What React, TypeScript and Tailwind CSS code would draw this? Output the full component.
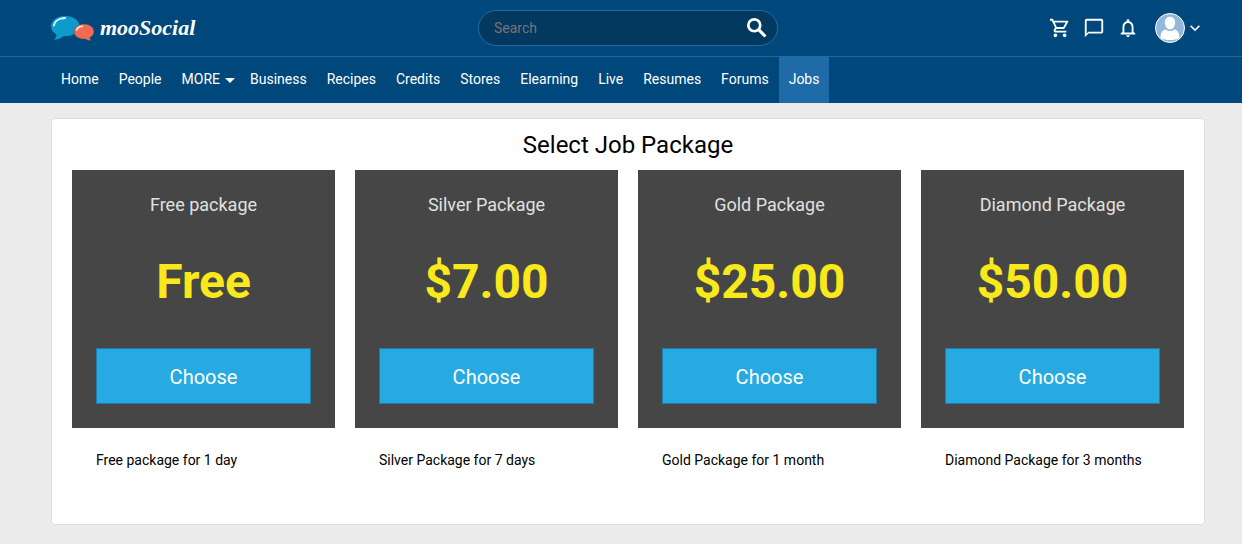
import {
  MdChatBubbleOutline,
  MdExpandMore,
  MdNotificationsNone,
  MdOutlineShoppingCart,
} from "react-icons/md";

const navItems = [
  "Home",
  "People",
  "MORE",
  "Business",
  "Recipes",
  "Credits",
  "Stores",
  "Elearning",
  "Live",
  "Resumes",
  "Forums",
  "Jobs",
];

const packages = [
  { name: "Free package", price: "Free", description: "Free package for 1 day" },
  { name: "Silver Package", price: "$7.00", description: "Silver Package for 7 days" },
  { name: "Gold Package", price: "$25.00", description: "Gold Package for 1 month" },
  { name: "Diamond Package", price: "$50.00", description: "Diamond Package for 3 months" },
];

function Logo() {
  return (
    <a href="#" className="flex items-center gap-1.5">
      <svg width="43" height="26" viewBox="0 0 43 26" aria-hidden="true">
        <path
          d="M14 1C6 1 0 5.500 0 11.200c0 3.500 2.200 6.500 5.500 8.300C5.300 21.500 4.500 23 3 24.600c4 0 7-1.300 9-3.400h2c8 0 14.500-4.500 14.500-10.200S22 1 14 1z"
          fill="#0d9bcb"
        />
        <path d="M3 10.500C3.500 6 8 3.200 14 3" stroke="#e6f6fc" strokeWidth="1.800" fill="none" strokeLinecap="round" />
        <path
          d="M33 9c-6 0-10 3.400-10 7.700S27 24 33 24h1.500c1.500 1.200 3.500 1.800 6 1.500-1-.8-1.500-1.800-1.500-3.200 2.500-1.300 4-3.300 4-5.600C43 12.400 39 9 33 9z"
          fill="#f26a50"
          stroke="#00477b"
          strokeWidth=".4"
        />
        <path d="M25.500 15c.8-2.200 3-3.500 6-3.700" stroke="#fdeee9" strokeWidth="1.600" fill="none" strokeLinecap="round" />
      </svg>
      <span className="font-['Liberation_Serif',serif] text-[22px] leading-7 font-bold italic">
        mooSocial
      </span>
    </a>
  );
}

function SearchIcon() {
  return (
    <svg width="26" height="26" viewBox="0 0 24 24" fill="none" stroke="currentColor" strokeWidth="2.500" aria-hidden="true">
      <circle cx="9.500" cy="9.500" r="5.500" />
      <path d="M13.500 13.500l6.300 6.300" strokeWidth="2.800" />
    </svg>
  );
}

function Avatar() {
  return (
    <svg width="30" height="30" viewBox="0 0 30 30" aria-hidden="true">
      <circle cx="15" cy="15" r="14.500" fill="#93b7dd" stroke="#fff" />
      <path d="M15 3.800c-3.300 0-5.200 2.400-5.200 5.800 0 3.600 2.200 7 5.200 7s5.200-3.400 5.200-7c0-3.400-1.900-5.800-5.200-5.800z" fill="#fff" />
      <path d="M5.500 25c0-5.200 1.800-8 5.300-8.600 2.400 2 6 2 8.400 0 3.500.6 5.300 3.400 5.300 8.600-2.500 1.400-6 2-9.500 2s-7-.6-9.500-2z" fill="#fff" />
    </svg>
  );
}

function navClass(item: string) {
  if (item === "Jobs") return "-mt-px bg-[#1f6ba8] px-2.5 pt-[13px] pb-3.5 leading-5";
  if (item === "MORE") return "flex items-center gap-[5px] pt-3 pr-[5px] pb-3.5 pl-2.5 leading-5";
  return "px-2.5 pt-3 pb-3.5 leading-5";
}

export default function App() {
  return (
    <div className="min-h-screen bg-[#ebebeb] font-[Roboto,sans-serif] text-sm text-black">
      <header className="bg-[#00477b] text-white">
        <div className="grid h-14 grid-cols-[1fr_300px_1fr] items-center pr-[37px] pl-[51px]">
          <Logo />
          <form className="flex h-9 items-center rounded-full border border-[#1f6ba8] bg-[#03385f] pr-[7px] pl-[15px]">
            <input
              type="search"
              aria-label="Search"
              placeholder="Search"
              className="min-w-0 flex-1 bg-transparent outline-none placeholder:text-[#757575]"
            />
            <button type="button" aria-label="Submit search">
              <SearchIcon />
            </button>
          </form>
          <div className="flex items-center justify-end gap-3">
            <button type="button" aria-label="Cart">
              <MdOutlineShoppingCart size={22} />
            </button>
            <button type="button" aria-label="Messages">
              <MdChatBubbleOutline size={22} />
            </button>
            <button type="button" aria-label="Notifications">
              <MdNotificationsNone size={22} />
            </button>
            <button type="button" aria-label="Account" className="ml-1 flex items-center">
              <Avatar />
              <MdExpandMore size={20} />
            </button>
          </div>
        </div>
        <nav className="flex border-t border-[#2a6491] pr-[37px] pl-[51px]">
          {navItems.map((item) => (
            <a key={item} href="#" className={navClass(item)}>
              {item}
              {item === "MORE" && (
                <span className="mt-0.5 border-x-5 border-t-5 border-x-transparent border-t-white" />
              )}
            </a>
          ))}
        </nav>
      </header>

      <main className="pt-[15px] pr-[37px] pb-5 pl-[51px]">
        <section className="rounded border border-[#dedede] bg-white px-5 pt-2.5 pb-[54px]">
          <h1 className="mb-[9px] text-center text-2xl leading-8">Select Job Package</h1>
          <div className="grid grid-cols-4 gap-5">
            {packages.map((pkg) => (
              <article key={pkg.name}>
                <div className="bg-[#464646] p-6 text-center">
                  <h2 className="text-lg leading-[22px] text-[#e0e0e0]">{pkg.name}</h2>
                  <p className="my-[39px] text-5xl leading-[54px] font-bold text-[#f8e81c]">{pkg.price}</p>
                  <button
                    type="button"
                    className="h-14 w-full border border-[#1e7fae] bg-[#27aae1] pt-0.5 text-xl text-white"
                  >
                    Choose
                  </button>
                </div>
                <p className="mt-[22px] px-6 leading-5">{pkg.description}</p>
              </article>
            ))}
          </div>
        </section>
      </main>
    </div>
  );
}
